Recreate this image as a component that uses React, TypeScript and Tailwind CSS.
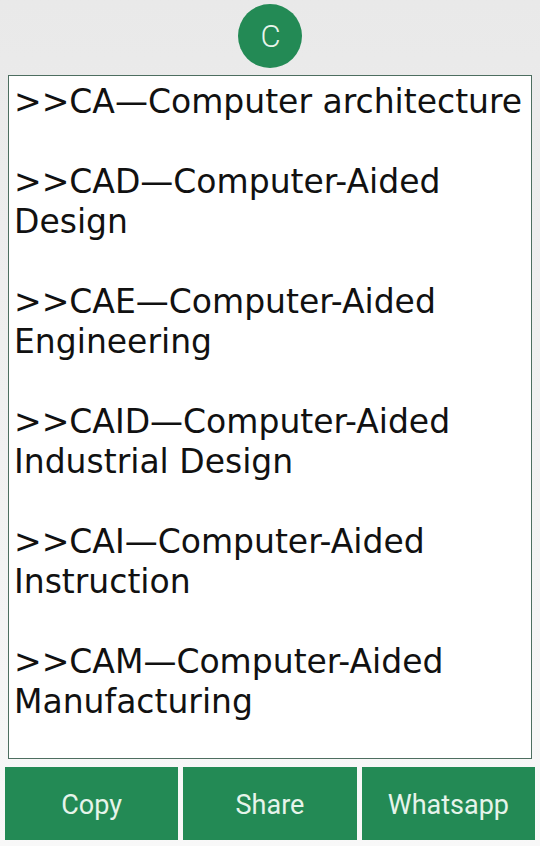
import React from "react";

const entries: string[] = [
  ">>CA—Computer architecture",
  ">>CAD—Computer-Aided Design",
  ">>CAE—Computer-Aided Engineering",
  ">>CAID—Computer-Aided Industrial Design",
  ">>CAI—Computer-Aided Instruction",
  ">>CAM—Computer-Aided Manufacturing",
];

export default function App() {
  return (
    <div className="w-[540px] h-[846px] flex flex-col bg-gradient-to-b from-[#e9e9e9] to-[#f8f8f8] overflow-hidden">
      <div className="h-[75px] shrink-0 flex items-start justify-center pt-[4px]">
        <div
          className="w-[64px] h-[64px] rounded-full bg-[#238a55] flex items-center justify-center text-[#e8f5ec] text-[31px] leading-none font-light pl-[1px]"
          style={{ fontFamily: "Roboto, sans-serif" }}
        >
          C
        </div>
      </div>
      <div className="shrink-0 mx-[8px] w-[524px] h-[684px] border border-[#4d6e60] bg-white overflow-hidden px-[5px] pt-[6px]">
        <div
          className="text-[33px] leading-[40px] text-[#111111] flex flex-col gap-[40px]"
          style={{ fontFamily: '"DejaVu Sans", sans-serif' }}
        >
          {entries.map((e, i) => (
            <div key={i}>{e}</div>
          ))}
        </div>
      </div>
      <div className="shrink-0 flex gap-[5px] px-[5px] pt-[8px]">
        {["Copy", "Share", "Whatsapp"].map((b) => (
          <div
            key={b}
            className="flex-1 h-[73px] bg-[#238a55] flex items-center justify-center text-[#e6f4ea] text-[27px] leading-none pt-[3px]"
            style={{ fontFamily: "Roboto, sans-serif" }}
          >
            {b}
          </div>
        ))}
      </div>
    </div>
  );
}
